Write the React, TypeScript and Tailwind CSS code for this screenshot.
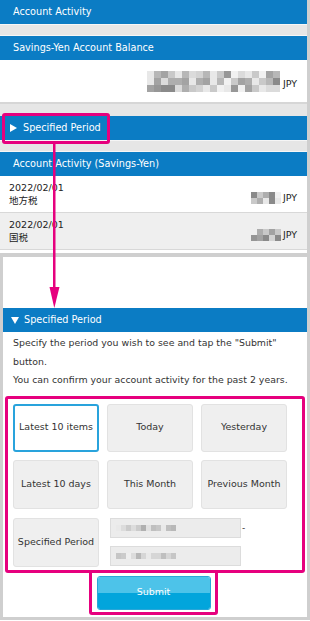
import React from "react";

const FONT = "font-['DejaVu_Sans','Noto_Sans_CJK_JP',Verdana,sans-serif]";

const grays = [
  "bg-[#d8d8d8]", "bg-[#9a9a9a]", "bg-[#c4c4c4]", "bg-[#7e7e7e]", "bg-[#e6e6e6]",
  "bg-[#b0b0b0]", "bg-[#f0f0f0]", "bg-[#8c8c8c]", "bg-[#cfcfcf]", "bg-[#a6a6a6]",
];

function Mosaic({ cols, rows, size, seed }: { cols: number; rows: number; size: string; seed: number }) {
  const cells: number[] = [];
  let s = seed;
  for (let i = 0; i < cols * rows; i++) {
    s = (s * 9301 + 49297) % 233280;
    cells.push(Math.floor((s / 233280) * grays.length));
  }
  return (
    <div className="flex flex-col opacity-90 blur-[0.6px]">
      {Array.from({ length: rows }).map((_, r) => (
        <div key={r} className="flex">
          {Array.from({ length: cols }).map((_, c) => (
            <div key={c} className={`${size} ${grays[cells[r * cols + c]]}`} />
          ))}
        </div>
      ))}
    </div>
  );
}

function BlueBar({ children }: { children: React.ReactNode }) {
  return (
    <div className="h-[24px] bg-[#0b7cc4] text-white text-[9.7px] flex items-center pl-[13px]">
      {children}
    </div>
  );
}

function Band() {
  return <div className="h-[12px] bg-[#e6e6e6] border-y border-[#f6f6f6]" />;
}

function Row({ name, alt, seed }: { name: string; alt?: boolean; seed: number }) {
  return (
    <div className={`h-[37px] flex items-center justify-between pl-[9px] pr-[10px] border-b border-[#d8d8d8] ${alt ? "bg-[#efefef]" : "bg-white"}`}>
      <div className="text-[9.5px] leading-[13px] text-[#222]">
        <div>2022/02/01</div>
        <div>{name}</div>
      </div>
      <div className="flex items-center gap-[2px] mt-[8px]">
        <Mosaic cols={5} rows={2} size="w-[6px] h-[6px]" seed={seed} />
        <span className="text-[9.5px] text-[#222]">JPY</span>
      </div>
    </div>
  );
}

function Btn({ label, active }: { label: string; active?: boolean }) {
  return (
    <div
      className={`h-full rounded-[3px] flex items-center justify-center text-[9.5px] text-[#333] ${
        active ? "bg-white border-2 border-[#29a3dc]" : "bg-[#efefef] border border-[#e2e2e2]"
      }`}
    >
      {label}
    </div>
  );
}

function Field({ seed }: { seed: number }) {
  return (
    <div className="h-[20px] w-[131px] bg-[#ececec] border border-[#dcdcdc] flex items-center pl-[5px]">
      <div className="opacity-60">
        <Mosaic cols={12} rows={1} size="w-[5px] h-[6px]" seed={seed} />
      </div>
    </div>
  );
}

export default function App() {
  return (
    <div className={`relative w-[310px] h-[621px] bg-white overflow-hidden ${FONT}`}>
      {/* Top screen */}
      <div className="h-[253px] border-r-[3px] border-[#cfcfcf] flex flex-col">
        <BlueBar>Account Activity</BlueBar>
        <Band />
        <BlueBar>Savings-Yen Account Balance</BlueBar>
        <div className="h-[44px] bg-white flex items-center justify-end pr-[10px] gap-[3px] border-b-2 border-[#d6d6d6]">
          <Mosaic cols={19} rows={3} size="w-[7px] h-[7px]" seed={7} />
          <span className="text-[9.5px] text-[#222] mt-[6px]">JPY</span>
        </div>
        <div className="h-[12px] bg-[#e6e6e6]" />
        <div className="h-[24px] bg-[#0b7cc4] text-white text-[9.7px] flex items-center pl-[10px] gap-[6px]">
          <svg width="7" height="8" viewBox="0 0 7 8"><path d="M0 0 L7 4 L0 8 Z" fill="white" /></svg>
          <span>Specified Period</span>
        </div>
        <Band />
        <BlueBar>Account Activity (Savings-Yen)</BlueBar>
        <Row name="地方税" seed={3} />
        <Row name="国税" alt seed={11} />
      </div>

      {/* Bottom screen */}
      <div className="h-[367px] border-x-[3px] border-t-[4px] border-b-[3px] border-[#cfcfcf] flex flex-col">
        <div className="h-[51px]" />
        <div className="h-[24px] bg-[#0b7cc4] text-white text-[9.7px] flex items-center pl-[8px] gap-[5px]">
          <svg width="8" height="7" viewBox="0 0 8 7"><path d="M0 0 L8 0 L4 7 Z" fill="white" /></svg>
          <span>Specified Period</span>
        </div>
        <div className="pl-[10px] pr-[4px] pt-[2px] text-[9.4px] leading-[18.5px] text-[#333]">
          <div>Specify the period you wish to see and tap the "Submit"</div>
          <div>button.</div>
          <div>You can confirm your account activity for the past 2 years.</div>
        </div>
        <div className="mx-[2px] mt-[6px] h-[177px] border-[3px] border-[#e6007e] rounded-[3px] pt-[5px] pl-[5px]">
          <div className="grid grid-cols-[86px_86px_86px] grid-rows-[48px_49px_49px] gap-x-[8px] gap-y-[8.5px]">
            <Btn label="Latest 10 items" active />
            <Btn label="Today" />
            <Btn label="Yesterday" />
            <Btn label="Latest 10 days" />
            <Btn label="This Month" />
            <Btn label="Previous Month" />
            <Btn label="Specified Period" />
            <div className="col-span-2 flex flex-col gap-[8px] pl-[3px]">
              <div className="flex items-center gap-[1px]">
                <Field seed={5} />
                <span className="text-[9px] text-[#333] mt-[2px]">-</span>
              </div>
              <Field seed={19} />
            </div>
          </div>
        </div>
        <div className="flex justify-center -mt-[3px] pr-[4px]">
          <div className="w-[129px] h-[45px] border-[3px] border-[#e6007e] rounded-[3px] p-[3px] pl-[5px]">
            <div className="h-[34px] w-[114px] rounded-[3px] overflow-hidden flex flex-col relative border border-[#2aa6d8]">
              <div className="h-1/2 bg-[#4dc3e9]" />
              <div className="h-1/2 bg-[#02a5dc]" />
              <span className="absolute inset-0 flex items-center justify-center text-white text-[9.5px]">Submit</span>
            </div>
          </div>
        </div>
      </div>

      {/* Annotation: pink box around top "Specified Period" */}
      <div className="absolute left-[2px] top-[113px] w-[108px] h-[31px] border-[3px] border-[#e6007e] rounded-[3px]" />
      {/* Annotation arrow */}
      <svg className="absolute left-[48px] top-[143px]" width="14" height="166" viewBox="0 0 14 166">
        <rect x="5" y="0" width="2.5" height="148" fill="#e6007e" />
        <path d="M1.5 144 L11.5 144 L6.3 165 Z" fill="#e6007e" />
      </svg>
    </div>
  );
}
